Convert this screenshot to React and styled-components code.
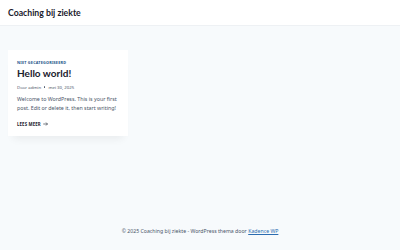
import React from 'react';
import styled, { createGlobalStyle } from 'styled-components';

const GlobalStyle = createGlobalStyle`
  html, body {
    margin: 0;
    padding: 0;
    background: #f7fafc;
    font-family: "Noto Sans", sans-serif;
    color: #4a5568;
  }
`;

const Page = styled.div`
  min-height: 250px;
  display: flex;
  flex-direction: column;
`;

const Header = styled.header`
  background: #ffffff;
  height: 25px;
  display: flex;
  align-items: center;
  padding: 0 8px;
  border-bottom: 1px solid #eef1f4;
`;

const SiteTitle = styled.div`
  font-family: Lato, "Noto Sans", sans-serif;
  font-size: 8.7px;
  font-weight: 700;
  color: #1a202c;
  padding-bottom: 1px;
`;

const Main = styled.main`
  flex: 1;
  padding: 24px 8px 0;
`;

const Card = styled.article`
  width: 120px;
  box-sizing: border-box;
  background: #ffffff;
  padding: 10px 9px 9px;
  box-shadow: 0 8px 8px -5px rgba(0, 0, 0, 0.06);
`;

const Category = styled.div`
  font-size: 3.8px;
  font-weight: 700;
  letter-spacing: 0.2px;
  color: #215387;
  text-transform: uppercase;
`;

const PostTitle = styled.h2`
  margin: 2px 0 0;
  font-family: Lato, "Noto Sans", sans-serif;
  font-size: 10px;
  font-weight: 700;
  color: #1a202c;
  line-height: 1.3;
`;

const Meta = styled.div`
  margin-top: 4px;
  font-size: 4.3px;
  color: #4a5568;
  display: flex;
  gap: 3px;
  align-items: center;
`;

const Dot = styled.span`
  width: 1.4px;
  height: 1.4px;
  border-radius: 50%;
  background: #4a5568;
`;

const Excerpt = styled.p`
  margin: 5px 0 0;
  font-size: 5.3px;
  line-height: 9px;
  color: #4a5568;
`;

const ReadMore = styled.div`
  margin-top: 8px;
  font-size: 4.3px;
  font-weight: 700;
  color: #1a202c;
  text-transform: uppercase;
  letter-spacing: 0.15px;
  display: flex;
  align-items: center;
  gap: 2px;
`;

const Arrow = styled.svg`
  width: 5px;
  height: 4px;
`;

const Footer = styled.footer`
  display: flex;
  justify-content: center;
  padding: 14px 0 15px;
  font-size: 5.2px;
  line-height: 7px;
  color: #4a5568;
`;

const Link = styled.a`
  color: #2b6cb0;
  text-decoration: underline;
  margin-left: 1.5px;
`;

export default function App() {
  return (
    <Page>
      <GlobalStyle />
      <Header>
        <SiteTitle>Coaching bij ziekte</SiteTitle>
      </Header>
      <Main>
        <Card>
          <Category>Niet gecategoriseerd</Category>
          <PostTitle>Hello world!</PostTitle>
          <Meta>
            <span>Door admin</span>
            <Dot />
            <span>mei 30, 2025</span>
          </Meta>
          <Excerpt>
            Welcome to WordPress. This is your first post. Edit or delete it, then start writing!
          </Excerpt>
          <ReadMore>
            <span>Lees meer</span>
            <Arrow viewBox="0 0 10 8" fill="none" stroke="#1a202c" strokeWidth="1.2">
              <path d="M0.5 4H9M6 1l3 3-3 3" />
            </Arrow>
          </ReadMore>
        </Card>
      </Main>
      <Footer>
        <span>© 2025 Coaching bij ziekte - WordPress thema door</span>
        <Link href="#">Kadence WP</Link>
      </Footer>
    </Page>
  );
}
